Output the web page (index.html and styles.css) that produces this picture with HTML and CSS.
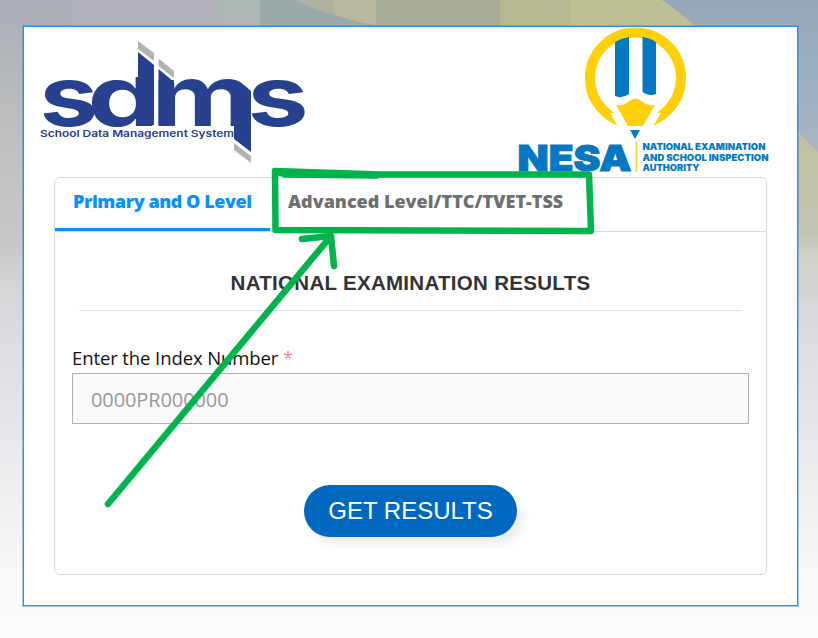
FILE: index.html
```html
<!DOCTYPE html>
<html lang="en">
<head>
<meta charset="utf-8">
<title>National Examination Results</title>
<link rel="stylesheet" href="styles.css">
</head>
<body>
<svg class="backdrop" viewBox="0 0 818 638" preserveAspectRatio="none" aria-hidden="true">
  <defs>
    <linearGradient id="base" x1="0" y1="0" x2="0" y2="1">
      <stop offset="0" stop-color="#a9aeb8"/><stop offset=".16" stop-color="#b9bbbc"/><stop offset=".3" stop-color="#c4c4c5"/>
      <stop offset=".38" stop-color="#c8c8cb"/><stop offset=".46" stop-color="#d6d7d9"/><stop offset=".66" stop-color="#e5e6ea"/>
      <stop offset=".8" stop-color="#f1f0f2"/><stop offset=".9" stop-color="#faf9fa"/><stop offset="1" stop-color="#fbfbfb"/>
    </linearGradient>
    <linearGradient id="blue" x1="0" y1="0" x2="0" y2="1">
      <stop offset="0" stop-color="#96a7b9"/><stop offset=".5" stop-color="#9cafc2"/><stop offset="1" stop-color="#adb4c0"/>
    </linearGradient>
    <linearGradient id="side" x1="0" y1="0" x2="0" y2="1">
      <stop offset="0" stop-color="#c3c0a0"/><stop offset=".6" stop-color="#c2c3b2"/><stop offset=".75" stop-color="#d0d4c8"/><stop offset="1" stop-color="#d3d4d3"/>
    </linearGradient>
  </defs>
  <rect width="818" height="638" fill="url(#base)"/>
  <path d="M72 0H218V26H72Z" fill="#b0b1b8"/>
  <path d="M218 0H262V26H218Z" fill="#adb6b5"/>
  <path d="M260 0H400V26H260Z" fill="#9ca9ab"/>
  <path d="M296 0H500V26H385Q335 20 296 0Z" fill="#a8ad98"/>
  <path d="M296 0H334V14Q314 9 296 0Z" fill="#b0b2a0"/>
  <path d="M334 0H376V25Q354 22 334 14Z" fill="#bab89f"/>
  <path d="M500 0H572V26H500Z" fill="#b5b891"/>
  <path d="M570 0H662Q680 12 696 27H570Z" fill="#bec094"/>
  <path d="M662 0H818V154L798 133V26H695Q680 12 662 0Z" fill="url(#blue)"/>
  <path d="M798 132L818 152V300H798Z" fill="url(#side)"/>
</svg>
<main class="modal">
  <header class="logos">
    <svg class="sdms" viewBox="0 0 275 130" role="img" aria-label="SDMS">
      <defs>
        <clipPath id="bowl"><path d="M40 40H100V20H118V95H40Z"/></clipPath>
      </defs>
      <g class="sdms-word">
        <text transform="translate(1.500 88.500) scale(1.25 1)">s</text>
        <g clip-path="url(#bowl)"><text transform="translate(49.500 88.500) scale(1.36 1)">d</text></g>
        <text transform="translate(113.500 88.500) scale(1.34 1)">m</text>
        <text transform="translate(209.500 88.500) scale(1.3 1)">s</text>
      </g>
      <g class="navy">
        <path d="M100 15L116 28V88H100Z"/><path d="M120.500 32L136 45V88H120.500Z"/><path d="M196 60L206 48L213 54V115L196 102Z"/>
      </g>
      <g class="silver">
        <path d="M100 4L116 16V24L100 12Z"/><path d="M120.500 21.500L136 34V41L120.500 29Z"/><path d="M196 106L213 119V126L196 113Z"/>
      </g>
      <text class="sdms-tag" x="2" y="99.500" textLength="194" lengthAdjust="spacingAndGlyphs">School Data Management System</text>
    </svg>
    <svg class="nesa" viewBox="0 0 256 150" role="img" aria-label="NESA">
      <circle cx="119.500" cy="50" r="45.500" fill="none" stroke="#ffd008" stroke-width="10"/>
      <path d="M95 77L119.500 66L144 77L133 112H106Z" fill="#fff"/>
      <path d="M94 85L106 105L112 84Z M145 85L133 105L127 84Z" fill="#fff"/>
      <path d="M99 14Q106 10 113 9V66Q106 71 99 68Z M126.500 9Q134 10 140 14V66Q133 69 126.500 64Z" fill="#0478c3"/>
      <path d="M100 77Q107 78 112 74Q119.500 67 127 74Q132 78 139 77L127 98H112Z" fill="#ffd008"/>
      <path d="M114 102H124L119 111Z" fill="#0478c3"/>
      <text class="nesa-word" x="1.500" y="143" textLength="114" lengthAdjust="spacingAndGlyphs">NESA</text>
      <path d="M120.500 113V144" stroke="#ffd93b" stroke-width="2"/>
      <g class="nesa-tag">
        <text x="126.500" y="122" textLength="123" lengthAdjust="spacingAndGlyphs">NATIONAL EXAMINATION</text>
        <text x="126.500" y="132.500" textLength="126" lengthAdjust="spacingAndGlyphs">AND SCHOOL INSPECTION</text>
        <text x="126.500" y="142.500" textLength="57" lengthAdjust="spacingAndGlyphs">AUTHORITY</text>
      </g>
    </svg>
  </header>
  <section class="card">
    <nav class="tabs">
      <a class="tab active"><span>Primary and O Level</span></a>
      <a class="tab"><span>Advanced Level/TTC/TVET-TSS</span></a>
    </nav>
    <form class="form">
      <h1>NATIONAL EXAMINATION RESULTS</h1>
      <label for="idx">Enter the Index Number <span class="required">*</span></label>
      <input id="idx" type="text" placeholder="0000PR000000">
      <button type="button">GET RESULTS</button>
    </form>
  </section>
</main>
<svg class="annotation" viewBox="0 0 818 638" aria-hidden="true">
  <path d="M275 171L380 174.500L589 174.500L591 231L275.500 230L275 171L285 174.500L377 175.500"/>
  <path d="M108 504L331 236M302 239L331 236L334 266"/>
</svg>
</body>
</html>
```
FILE: styles.css
```css
* { box-sizing: border-box; }
body { margin: 0; width: 818px; height: 638px; overflow: hidden; display: flex; padding: 26px 19px 31px 23px; font-family: "Open Sans", "Noto Sans", sans-serif; }
.backdrop { position: absolute; inset: 0; width: 818px; height: 638px; z-index: -1; }
.modal { width: 775px; height: 580px; border: 1px solid #2492ec; outline: 1px solid rgba(36,146,236,.45); background: #fff; padding: 0 30px; }
.logos { display: flex; justify-content: space-between; height: 150px; margin: 0 -5px 0 -16px; }
.sdms { width: 275px; height: 130px; margin-top: 10px; overflow: visible; }
.nesa { width: 256px; height: 150px; margin-top: 1px; overflow: visible; }
.sdms-word { font: 700 84px "Inter", sans-serif; fill: #27418f; }
.navy { fill: #27418f; }
.silver { fill: #b2b2b2; }
.sdms-tag { font: 600 9.5px "Inter", sans-serif; fill: #27418f; }
.nesa-word { font: 900 36px "Inter", sans-serif; fill: #0478c3; stroke: #0478c3; stroke-width: 1; }
.nesa-tag { font: 900 9px "Inter", sans-serif; fill: #0478c3; }
.card { width: 713px; height: 398px; border: 1px solid #d9d9d9; border-radius: 6px; }
.tabs { display: flex; height: 54px; border-bottom: 1px solid #d9d9d9; }
.tab { display: flex; height: 53px; padding: 0 18px 8px; align-items: center; font-size: 18px; font-weight: 800; color: #6f6f6f; white-space: nowrap; }
.tab.active { color: #0a91ff; width: 215px; border-bottom: 3px solid #0a91ff; padding-bottom: 5px; letter-spacing: -.45px; }
.form { display: flex; flex-direction: column; padding: 0 17px; }
h1 { margin: 35px 7px 0; height: 44px; border-bottom: 1px solid #e2e2e2; font: 700 20.5px/32px "Liberation Sans", sans-serif; letter-spacing: .3px; color: #333; text-align: center; }
label { margin-top: 33px; height: 29px; font-size: 18.5px; line-height: 28px; letter-spacing: -.1px; color: #111; white-space: pre; }
.required { color: #f44; font-weight: 300; }
input { height: 51px; width: 677px; border: 1px solid #b0b0b0; background: #fafafa; padding: 2px 18px 0; font: 20px "Open Sans", sans-serif; letter-spacing: -.1px; color: #333; }
input::placeholder { color: #999; opacity: 1; }
button { width: 213px; height: 52px; margin: 61px auto 0 232px; border: 0; border-radius: 26px; background: #0069bf; color: #fff; font: 24px "Liberation Sans", sans-serif; padding: 0; box-shadow: 6px 7px 8px rgba(0,0,0,.08); }
.annotation { position: absolute; inset: 0; width: 818px; height: 638px; pointer-events: none; fill: none; stroke: #00b44b; stroke-width: 6.500; stroke-linecap: round; stroke-linejoin: round; }
```
